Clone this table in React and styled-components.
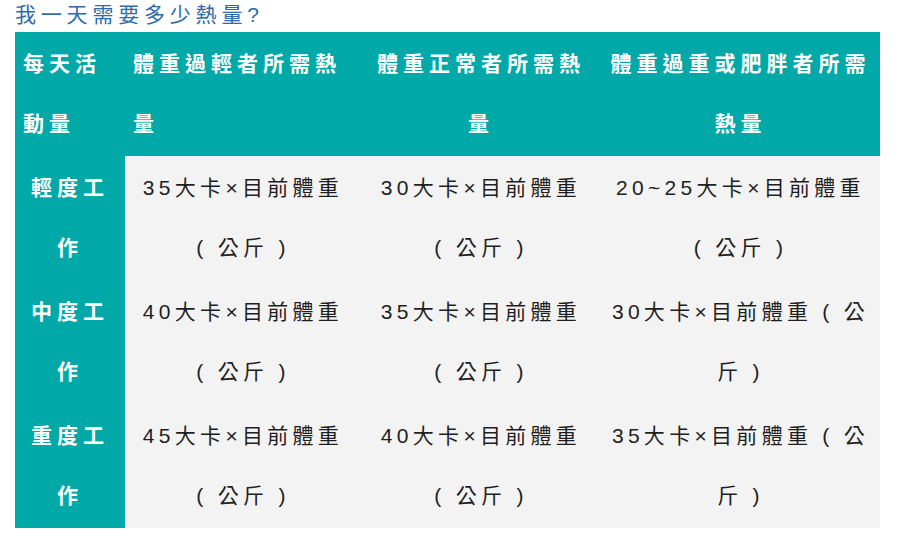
import React from "react";
import styled, { createGlobalStyle } from "styled-components";

const GlobalStyle = createGlobalStyle`
  html, body { margin: 0; padding: 0; background: #ffffff; }
  body { font-family: "Liberation Sans", "Noto Sans CJK TC", sans-serif; }
`;

const Page = styled.div`
  padding: 0 20px 0 15px;
`;

const Title = styled.h3`
  margin: 0;
  padding-top: 1px;
  height: 31px;
  font-size: 21px;
  line-height: 28px;
  font-weight: 400;
  letter-spacing: 4.8px;
  color: #2d6ba9;
  font-family: "Liberation Sans", "Noto Sans CJK TC", sans-serif;
`;

const Table = styled.table`
  width: 865px;
  table-layout: fixed;
  border-collapse: collapse;
  border-spacing: 0;
`;

const Cell = styled.td`
  padding: 2px 8px;
  vertical-align: top;
  font-size: 21px;
  line-height: 60px;
  letter-spacing: ${(p) => (p.$head ? "5px" : "4.3px")};
  white-space: nowrap;
  text-align: ${(p) => p.$align || "center"};
  background: ${(p) => (p.$head ? "#00a8a8" : "#f3f3f3")};
  color: ${(p) => (p.$head ? "#ffffff" : "#1e1e1e")};
  font-weight: ${(p) => (p.$head ? 700 : 400)};
`;

const Line = styled.span`
  display: block;
`;

const cols = [110, 236, 240, 279];

const header = [
  { lines: ["每天活", "動量"], align: "left" },
  { lines: ["體重過輕者所需熱", "量"], align: "left" },
  { lines: ["體重正常者所需熱", "量"], align: "center" },
  { lines: ["體重過重或肥胖者所需", "熱量"], align: "center" },
];

const rows = [
  {
    label: ["輕度工", "作"],
    cells: [
      ["35大卡×目前體重", "( 公斤 )"],
      ["30大卡×目前體重", "( 公斤 )"],
      ["20~25大卡×目前體重", "( 公斤 )"],
    ],
  },
  {
    label: ["中度工", "作"],
    cells: [
      ["40大卡×目前體重", "( 公斤 )"],
      ["35大卡×目前體重", "( 公斤 )"],
      ["30大卡×目前體重 ( 公", "斤 )"],
    ],
  },
  {
    label: ["重度工", "作"],
    cells: [
      ["45大卡×目前體重", "( 公斤 )"],
      ["40大卡×目前體重", "( 公斤 )"],
      ["35大卡×目前體重 ( 公", "斤 )"],
    ],
  },
];

function Lines({ lines }) {
  return lines.map((l, i) => <Line key={i}>{l}</Line>);
}

export default function App() {
  return (
    <Page>
      <GlobalStyle />
      <Title>我一天需要多少熱量?</Title>
      <Table>
        <colgroup>
          {cols.map((w, i) => (
            <col key={i} style={{ width: w }} />
          ))}
        </colgroup>
        <thead>
          <tr>
            {header.map((h, i) => (
              <Cell as="th" key={i} $head $align={h.align}>
                <Lines lines={h.lines} />
              </Cell>
            ))}
          </tr>
        </thead>
        <tbody>
          {rows.map((r, i) => (
            <tr key={i}>
              <Cell as="th" $head>
                <Lines lines={r.label} />
              </Cell>
              {r.cells.map((c, j) => (
                <Cell key={j}>
                  <Lines lines={c} />
                </Cell>
              ))}
            </tr>
          ))}
        </tbody>
      </Table>
    </Page>
  );
}
